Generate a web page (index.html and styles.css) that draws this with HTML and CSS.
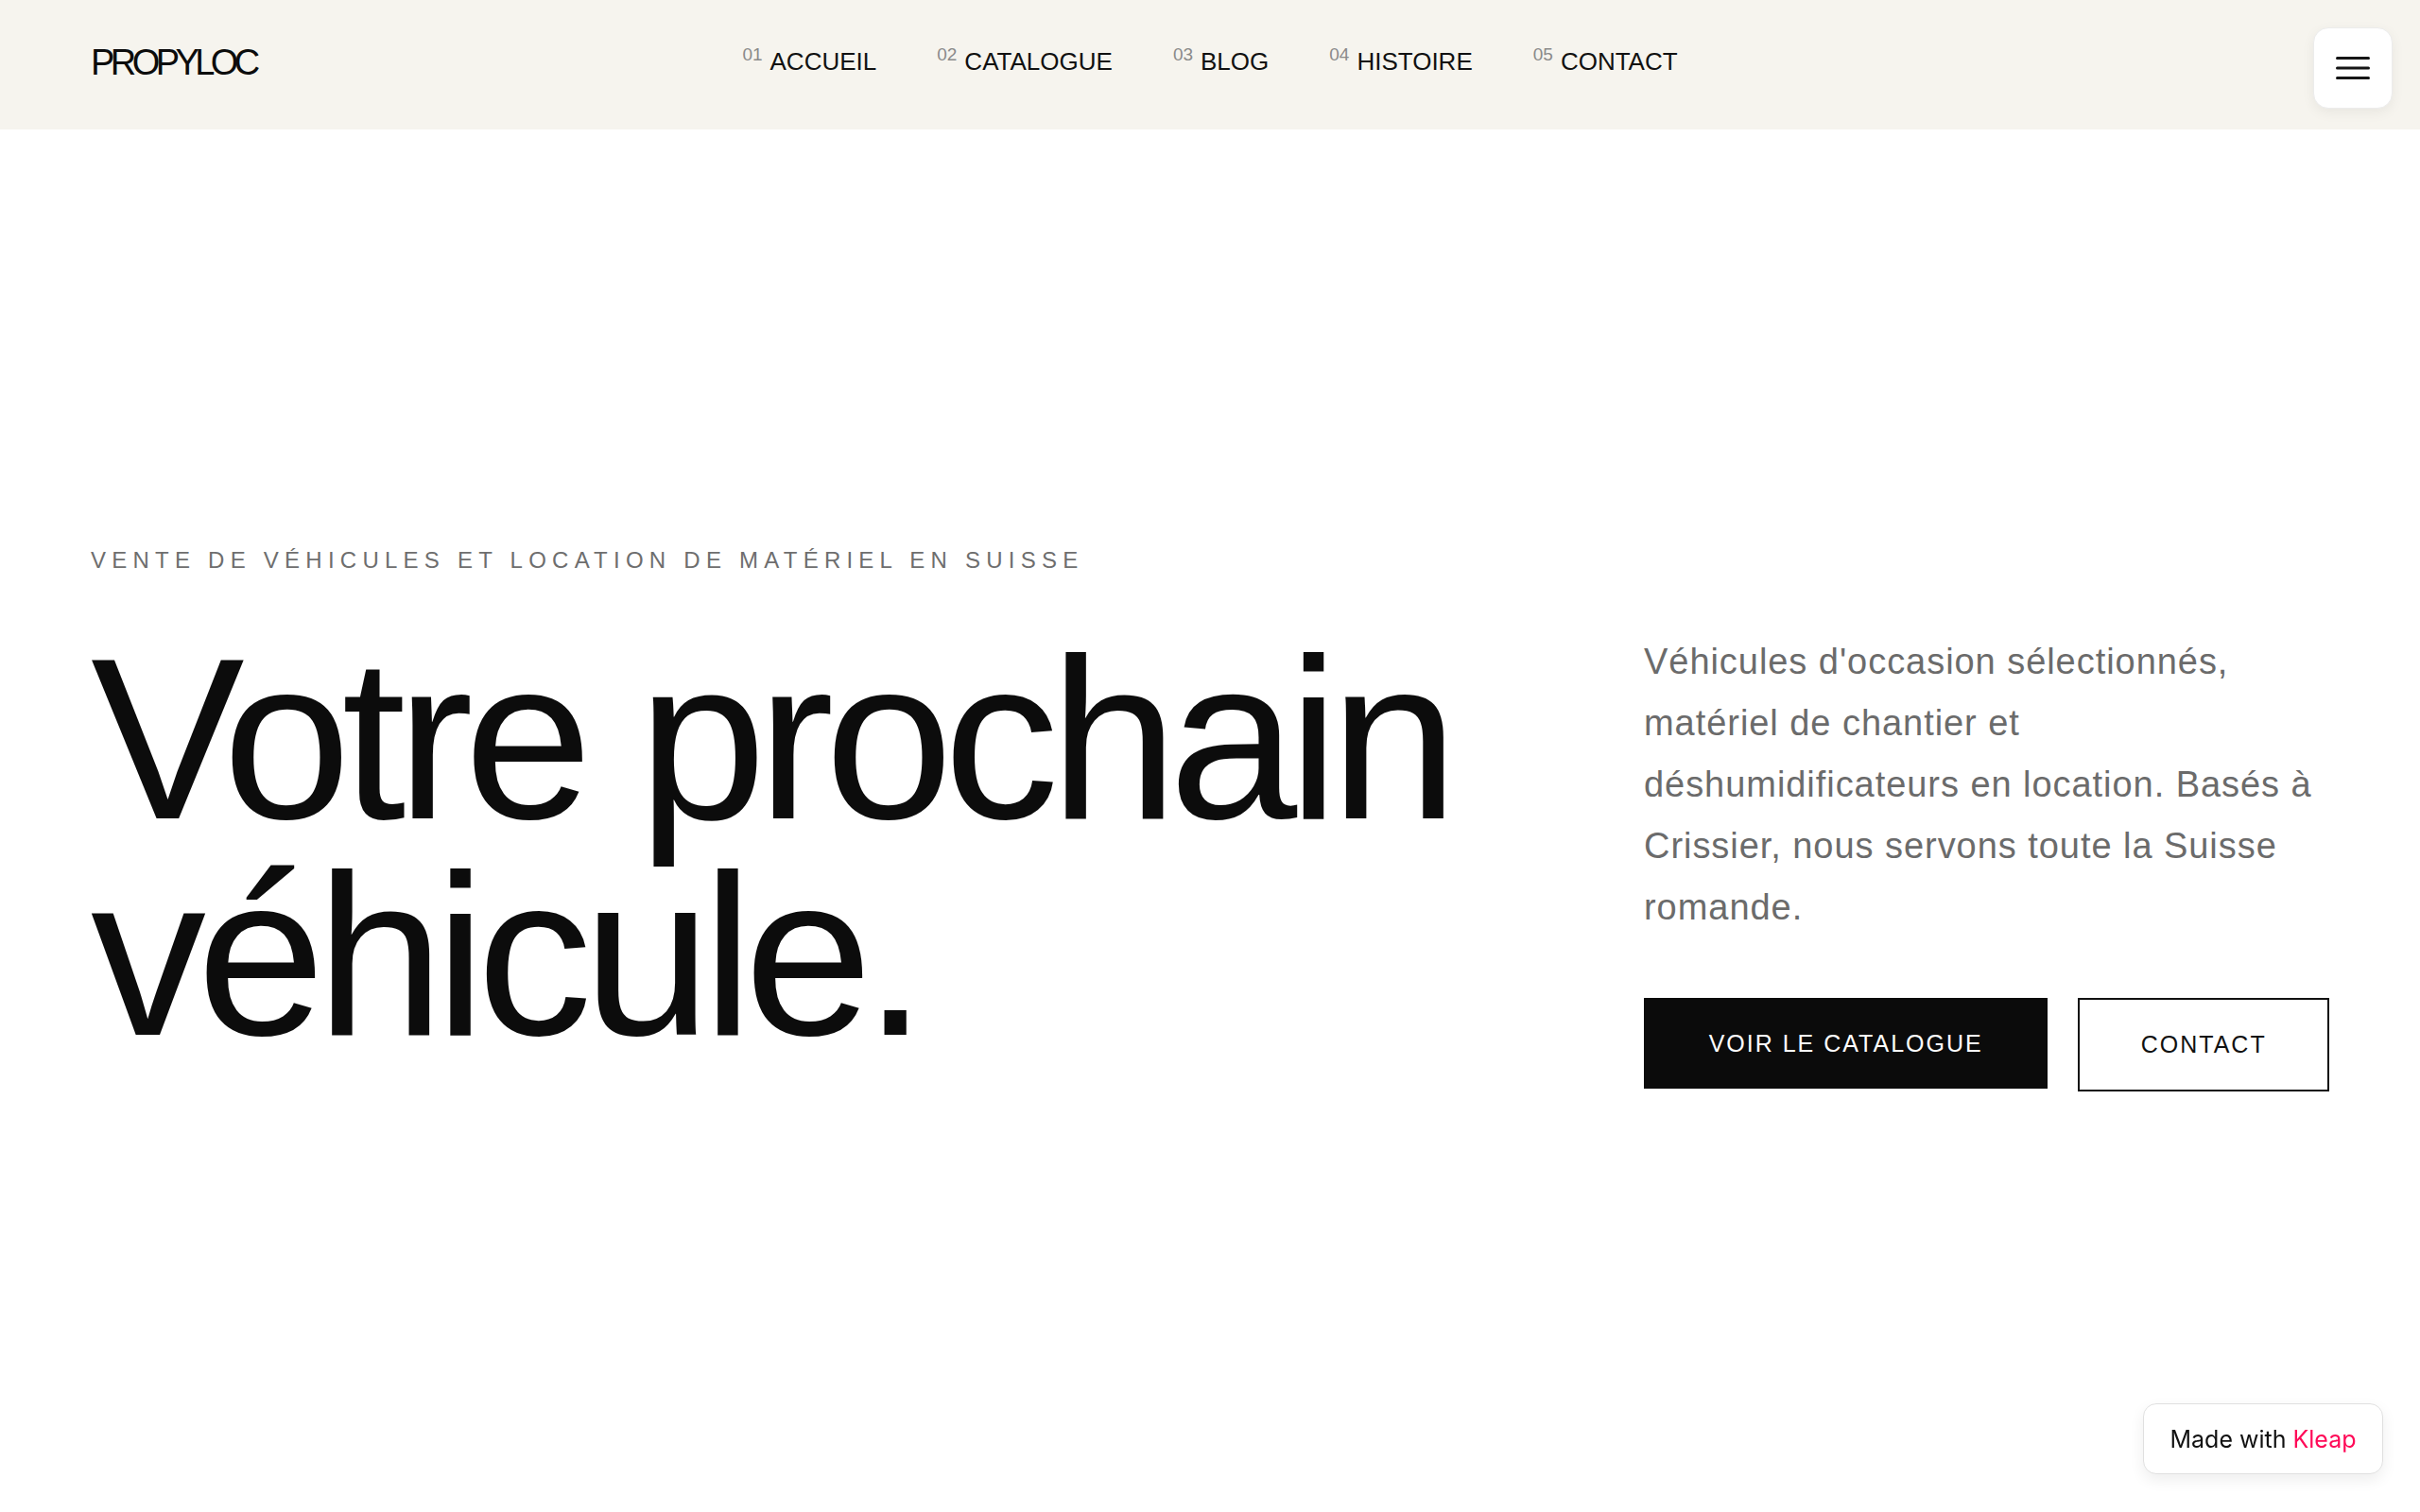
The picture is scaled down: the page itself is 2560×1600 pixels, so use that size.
FILE: index.html
```html
<!DOCTYPE html>
<html lang="fr">
<head>
<meta charset="utf-8">
<title>Propyloc</title>
<link rel="stylesheet" href="styles.css">
</head>
<body>
<header class="topbar">
  <div class="logo">PROPYLOC</div>
  <nav class="nav">
    <a class="nav-item" href="#"><span class="nav-num">01</span>ACCUEIL</a>
    <a class="nav-item" href="#"><span class="nav-num">02</span>CATALOGUE</a>
    <a class="nav-item" href="#"><span class="nav-num">03</span>BLOG</a>
    <a class="nav-item" href="#"><span class="nav-num">04</span>HISTOIRE</a>
    <a class="nav-item" href="#"><span class="nav-num">05</span>CONTACT</a>
  </nav>
  <div class="topbar-end">
    <button class="menu-btn" aria-label="Menu">
      <svg width="36" height="24" viewBox="0 0 36 24"><g stroke="#151515" stroke-width="3" stroke-linecap="round"><line x1="1.5" y1="1.5" x2="34.5" y2="1.5"/><line x1="1.5" y1="12" x2="34.5" y2="12"/><line x1="1.5" y1="22.5" x2="34.5" y2="22.5"/></g></svg>
    </button>
  </div>
</header>
<main class="hero">
  <div class="hero-inner">
    <p class="eyebrow">VENTE DE VÉHICULES ET LOCATION DE MATÉRIEL EN SUISSE</p>
    <div class="hero-grid">
      <h1 class="headline">Votre prochain<br>véhicule.</h1>
      <div class="hero-side">
        <p class="lead">Véhicules d'occasion sélectionnés, matériel de chantier et déshumidificateurs en location. Basés à Crissier, nous servons toute la Suisse romande.</p>
        <div class="actions">
          <a class="btn btn-dark" href="#">VOIR LE CATALOGUE</a>
          <a class="btn btn-outline" href="#">CONTACT</a>
        </div>
      </div>
    </div>
  </div>
</main>
<a class="made-with" href="#">Made with <span class="kleap">Kleap</span></a>
</body>
</html>
```
FILE: styles.css
```css
* { box-sizing: border-box; }
html, body { margin: 0; padding: 0; }
body {
  font-family: "Liberation Sans", Arial, sans-serif;
  color: #0c0c0c;
  background: #ffffff;
}
a { color: inherit; text-decoration: none; }

.topbar {
  height: 137px;
  background: #f6f4ee;
  display: grid;
  grid-template-columns: 1fr auto 1fr;
  align-items: center;
  padding: 0 29px;
}
.logo {
  padding-left: 67px;
  font-size: 38px;
  letter-spacing: -0.12em;
  color: #0c0c0c;
  margin-top: -4px;
}
.nav {
  display: flex;
  gap: 64px;
  font-size: 26px;
  margin-top: -10px;
}
.nav-item {
  display: inline-block;
  color: #111;
  letter-spacing: 0;
}
.nav-num {
  font-size: 19px;
  color: #8a8a8a;
  vertical-align: 10px;
  margin-right: 8px;
  letter-spacing: 0;
}
.topbar-end {
  display: flex;
  justify-content: flex-end;
}
.menu-btn {
  width: 84px;
  height: 86px;
  border-radius: 16px;
  background: #ffffff;
  border: 1px solid #ececec;
  box-shadow: 0 4px 14px rgba(0,0,0,0.06);
  display: flex;
  align-items: center;
  justify-content: center;
  padding: 0;
  margin-top: 6px;
}
.menu-btn svg { display: block; }

.hero {
  min-height: 1463px;
  display: flex;
  align-items: center;
  padding: 0 96px 4px;
}
.hero-inner { width: 100%; }
.eyebrow {
  margin: 0 0 60px 0;
  font-size: 24px;
  line-height: 29px;
  letter-spacing: 0.26em;
  color: #6e6e6e;
}
.hero-grid {
  display: grid;
  grid-template-columns: 1fr 725px;
  align-items: start;
}
.headline {
  margin: 0;
  font-weight: 400;
  font-size: 244px;
  line-height: 229px;
  letter-spacing: -0.04em;
  color: #0c0c0c;
}
.hero-side { padding-top: 1px; }
.lead {
  margin: 0;
  font-size: 38px;
  line-height: 65px;
  letter-spacing: 0.025em;
  color: #6b6b6b;
}
.actions {
  display: flex;
  gap: 32px;
  margin-top: 63px;
  align-items: flex-start;
}
.btn {
  display: inline-flex;
  align-items: center;
  justify-content: center;
  height: 96px;
  font-size: 25px;
  letter-spacing: 0.08em;
}
.btn-dark {
  background: #0b0b0b;
  color: #ffffff;
  width: 428px;
}
.btn-outline {
  border: 2px solid #111;
  color: #111;
  height: 99px;
  width: 266px;
}

.made-with {
  position: fixed;
  right: 39px;
  bottom: 40px;
  width: 254px;
  height: 75px;
  background: #fff;
  border: 1px solid #e0e0e0;
  border-radius: 14px;
  box-shadow: 0 6px 16px rgba(0,0,0,0.07);
  display: flex;
  align-items: center;
  justify-content: center;
  font-family: Inter, "Liberation Sans", sans-serif;
  font-size: 25px;
  color: #111;
}
.kleap { color: #ff0a58; margin-left: 7px; }
```
